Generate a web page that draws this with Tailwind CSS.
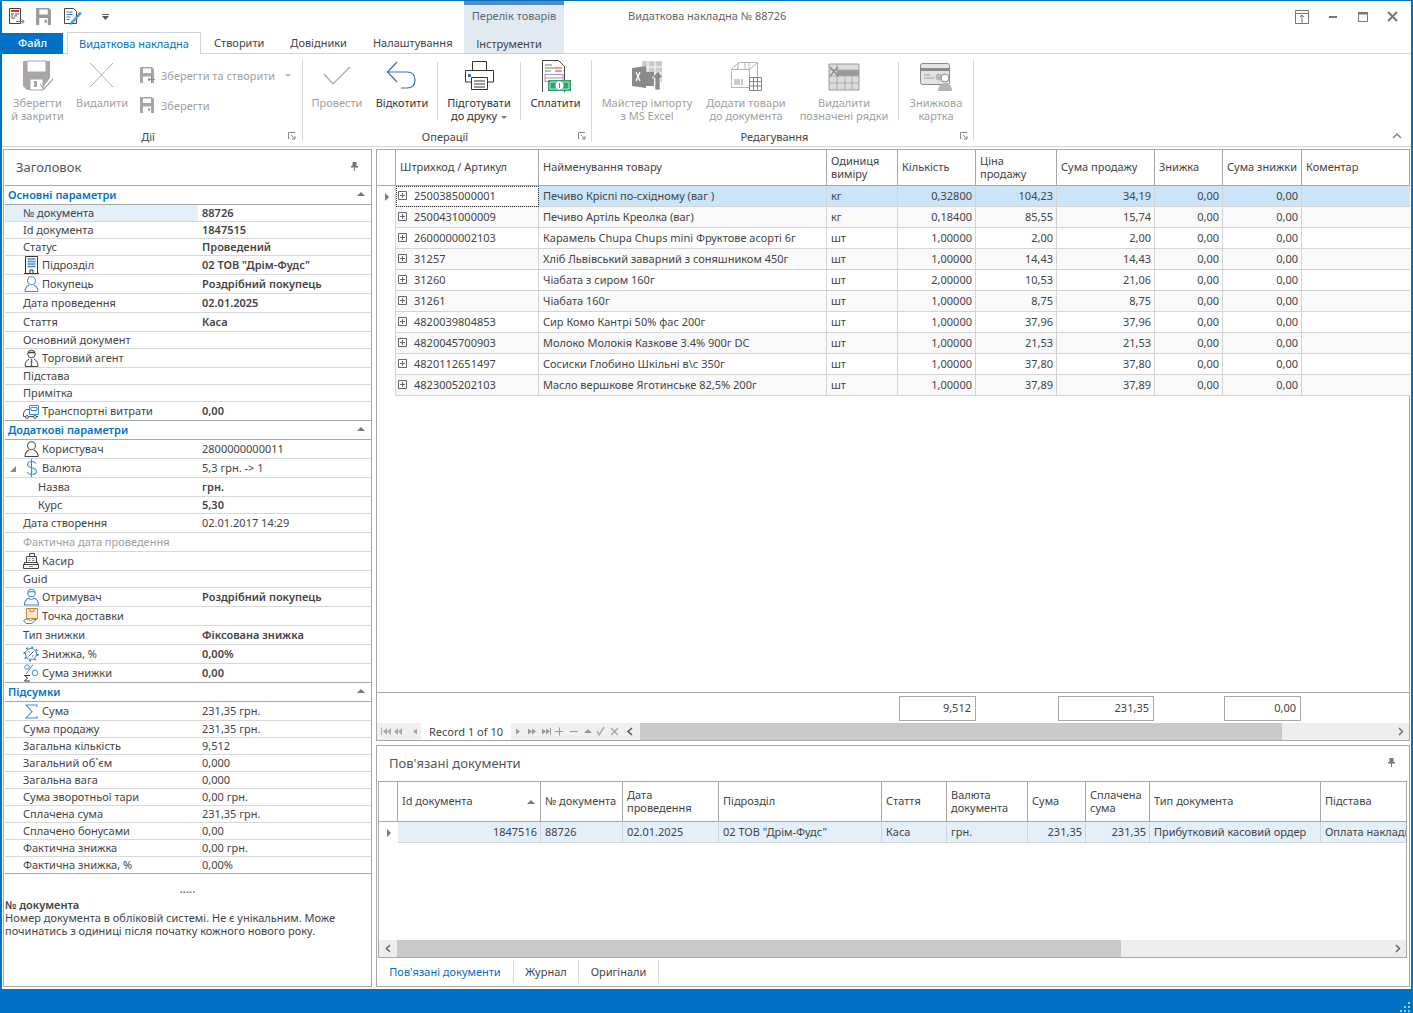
<!DOCTYPE html>
<html lang="uk">
<head>
  <meta charset="UTF-8">
  <title>Видаткова накладна № 88726</title>
  <script src="https://cdn.jsdelivr.net/npm/@tailwindcss/browser@4"></script>
</head>
<body class="h-screen overflow-hidden bg-white font-['Noto_Sans',sans-serif] text-[11px] leading-[13px] text-[#444]">
<svg class="hidden">
  <symbol id="save" viewBox="0 0 16 16"><path d="M1 0h12l2 2v14H1z" fill="currentColor"/><path d="M4 1.500h8V6H4zM4 9.500h8V16H4z" fill="#fff"/><path d="M9 11h2v3H9z" fill="currentColor"/></symbol>
  <symbol id="person" viewBox="0 0 16 18"><circle cx="8" cy="5.500" r="4.200" fill="none" stroke="currentColor" stroke-width="1.100"/><path d="M1 17c0-4 2.500-6 4.500-7M15 17c0-4-2.500-6-4.500-7M1 17h14" fill="none" stroke="currentColor" stroke-width="1.100"/></symbol>
</svg>

<div class="flex h-full flex-col border-x-2 border-t border-[#0072c6]">
  <!-- title bar -->
  <div class="relative z-10 flex h-[31px] shrink-0 items-start">
    <div class="flex h-[31px] w-[462px] items-center pl-[5px]">
      <svg width="19" height="19" viewBox="0 0 19 19" fill="none" class="mt-[-1px]"><path d="M2.500 1.500h11v15h-11z" stroke="#444"/><path d="M4 3h8v2H4z" fill="#e03030"/><path d="M4 7h3M8 7h4M4 9h2M7 9h3M4 11h4" stroke="#555"/><path d="M9 14.500h8M14.500 12l2.500 2.500-2.500 2.500" stroke="#3a9a6a"/></svg>
      <svg width="17" height="17" viewBox="0 0 16 16" class="ml-[9px] text-[#999]"><use href="#save"/></svg>
      <svg width="20" height="19" viewBox="0 0 20 19" fill="none" class="ml-[10px]"><path d="M2.500 1.500h9l3 3v12h-12z" stroke="#444"/><path d="M4.500 5h6M4.500 7.500h6M4.500 10h4M4.500 12.500h3" stroke="#2b7cc0"/><path d="M9 15l9-10 1.500 1.500-9 10-2.500 1z" fill="#5ba3d9" stroke="#2b7cc0" stroke-width=".5"/></svg>
      <svg width="7" height="6" viewBox="0 0 7 6" class="ml-[20px]"><path d="M0 0h7v1H0zM0 2h7L3.500 6z" fill="#555"/></svg>
    </div>
    <div class="flex h-[52px] w-[100px] flex-col items-center border-t-[4px] border-[#5b8ab5] bg-[#e1e9f2] text-[#5a6a7a]">
      <span class="mt-[4px]">Перелік товарів</span>
      <span class="mr-[10px] mt-[15px] text-[#444]">Інструменти</span>
    </div>
    <div class="ml-[64px] mt-[8px] text-[#666]">Видаткова накладна № 88726</div>
    <div class="ml-auto flex h-[31px] items-center pr-[13px] text-[#777]">
      <svg width="14" height="14" viewBox="0 0 14 14" fill="none" stroke="currentColor"><path d="M.5.500h13v13H.500zM.5 3.500h13M7 13V5M5 7l2-2 2 2"/></svg>
      <svg width="8" height="3" viewBox="0 0 8 3" class="ml-[20px] mt-[2px]"><path d="M0 0h8v2H0z" fill="currentColor"/></svg>
      <svg width="10" height="10" viewBox="0 0 10 10" fill="none" stroke="currentColor" class="ml-[21px]"><path d="M.5.500h9v9h-9z"/><path d="M0 0h10v2.500H0z" fill="currentColor" stroke="none"/></svg>
      <svg width="11" height="11" viewBox="0 0 11 11" fill="none" stroke="currentColor" stroke-width="2" class="ml-[19px]"><path d="M1 1l9 9M10 1l-9 9"/></svg>
    </div>
  </div>

  <!-- tabs -->
  <div class="flex h-[22px] shrink-0 items-end border-b border-[#d2d2d2]">
    <div class="mb-[-1px] flex h-[21px] w-[61px] items-center justify-center bg-[#0072c6] pb-[2px] font-medium text-white">Файл</div>
    <div class="relative top-px ml-[4px] flex h-[22px] w-[134px] items-center justify-center border-x border-t border-[#d2d2d2] bg-white text-[#0072c6]">Видаткова накладна</div>
    <div class="ml-[13px] flex h-[21px] items-center">Створити</div>
    <div class="ml-[26px] flex h-[21px] items-center">Довідники</div>
    <div class="ml-[26px] flex h-[21px] items-center">Налаштування</div>
  </div>

  <!-- ribbon -->
  <div class="relative flex h-[93px] shrink-0 border-b border-[#d2d2d2] pt-[6px] text-center">
    <div class="relative flex h-[81px] w-[301px] border-r border-[#d8d8d8] text-[#a0a0a0]">
      <div class="w-[71px]"><svg width="32" height="31" viewBox="0 0 32 31" class="mx-auto"><path d="M1 1h27v17l-9 12H5l-4-4z" fill="#a6a6a6"/><path d="M5 1h19v11H5zM8 19h13v11H8z" fill="#fff" stroke="#a6a6a6"/><path d="M12 21h3v6h-3z" fill="#a6a6a6"/><path d="M18 24l4 5 9-10" fill="none" stroke="#a6a6a6" stroke-width="1.200"/></svg><div class="mt-[5px]">Зберегти<br>й закрити</div></div>
      <div class="w-[58px]"><svg width="32" height="31" viewBox="0 0 32 31" class="mx-auto" fill="none" stroke="#b0b0b0"><path d="M4 3l23 24M27 3L4 27"/></svg><div class="mt-[5px]">Видалити</div></div>
      <div class="ml-[8px] flex flex-col text-left">
        <div class="mt-[7px] flex h-[16px] items-center"><svg width="16" height="16" viewBox="0 0 16 16" class="text-[#a6a6a6]"><use href="#save"/><path d="M9 12.500h7M12.500 9v7" stroke="#888" stroke-width="1" fill="none"/></svg><span class="ml-[6px]">Зберегти та створити</span><span class="ml-[10px] mt-[1px] h-0 w-0 border-x-[3px] border-t-[3px] border-x-transparent border-t-[#bbb]"></span></div>
        <div class="mt-[14px] flex h-[16px] items-center"><svg width="16" height="16" viewBox="0 0 16 16" class="text-[#a6a6a6]"><use href="#save"/></svg><span class="ml-[6px]">Зберегти</span></div>
      </div>
      <div class="absolute inset-x-0 bottom-[-2px] text-[#444] pr-[8px]">Дії</div>
      <svg width="8" height="8" viewBox="0 0 8 8" fill="none" stroke="#888" class="absolute bottom-[1px] right-[6px]"><path d="M.5 7V.5H7M3 3l4 4M4 7h3V4"/></svg>
    </div>
    <div class="relative flex h-[81px] w-[289px] border-r border-[#d8d8d8]">
      <div class="w-[68px] text-[#a0a0a0]"><svg width="32" height="31" viewBox="0 0 32 31" class="mx-auto" fill="none" stroke="#a6a6a6" stroke-width="1.200"><path d="M3 14l9 10L29 7"/></svg><div class="mt-[5px]">Провести</div></div>
      <div class="w-[62px] text-[#333]"><svg width="32" height="31" viewBox="0 0 32 31" class="mx-auto" fill="none" stroke="#3c6ea5" stroke-width="1.200"><path d="M2 12h19c5 0 8 3 8 8s-3 8-8 8h-6M11 2L1.500 12 11 22"/></svg><div class="mt-[5px]">Відкотити</div></div>
      <div class="ml-[4px] mt-[2px] h-[58px] w-px bg-[#d8d8d8]"></div>
      <div class="w-[82px] text-[#333]"><svg width="32" height="31" viewBox="0 0 32 31" class="mx-auto" fill="none" stroke="#333"><path d="M9.500 1.500h14v9h-14zM9 22H2.500V10.500h28V22H24M8.500 17.500h16v12h-16zM11 21h11M11 24h11M11 27h11"/><path d="M5 14h3v3H5z" fill="#2b7cc0" stroke="none"/></svg><div class="mt-[5px]">Підготувати<br>до друку <span class="ml-[1px] inline-block h-0 w-0 align-middle border-x-[3px] border-t-[3px] border-x-transparent border-t-[#777]"></span></div></div>
      <div class="mt-[2px] h-[58px] w-px bg-[#d8d8d8]"></div>
      <div class="w-[69px] text-[#333]"><svg width="32" height="33" viewBox="0 0 32 33" class="mx-auto mt-[-1px]" fill="none"><path d="M2.500 1.500h16l6 6v26h-22z" stroke="#444"/><path d="M5 6h7M5 9h10M5 12h6" stroke="#777"/><path d="M15 9h7" stroke="#d33"/><path d="M15 12h7" stroke="#d33"/><path d="M5 15.500h18v7H5z" stroke="#a78bc0"/><path d="M5 19h18" stroke="#a78bc0"/><path d="M8 21h23v11H8z" fill="#2fa36b"/><circle cx="19.500" cy="26.500" r="4" fill="#fff"/><path d="M10 23h19v7H10z" stroke="#fff" stroke-width=".7"/><path d="M19.500 24v5" stroke="#2fa36b"/></svg><div class="mt-[4px]">Сплатити</div></div>
      <div class="absolute inset-x-0 bottom-[-2px] text-[#444] pr-[4px]">Операції</div>
      <svg width="8" height="8" viewBox="0 0 8 8" fill="none" stroke="#888" class="absolute bottom-[1px] right-[5px]"><path d="M.5 7V.5H7M3 3l4 4M4 7h3V4"/></svg>
    </div>
    <div class="relative flex h-[81px] w-[382px] border-r border-[#d8d8d8] text-[#a0a0a0]">
      <div class="w-[110px]"><svg width="32" height="31" viewBox="0 0 32 31" class="mx-auto" fill="none"><path d="M11 1h20v21H11z" fill="#ccc"/><path d="M11 7h20M11 13h20M17 1v21M24 1v21" stroke="#fff"/><path d="M1 8l14-2v22L1 26z" fill="#8a8a8a"/><path d="M15 12h8v14h-8z" fill="#8a8a8a"/><path d="M24 30V18h-3l6-7 5 7h-3v12z" fill="#8a8a8a" stroke="#fff" stroke-width=".7"/><path d="M5 12l4 9M9 12l-4 9" stroke="#fff" stroke-width="1.300"/></svg><div class="mt-[5px]">Майстер імпорту<br>з MS Excel</div></div>
      <div class="w-[88px]"><svg width="32" height="31" viewBox="0 0 32 31" class="mx-auto" fill="none" stroke="#b5b5b5"><path d="M1.500 9.500l7-7h19v18M1.500 9.500h18v18h-18zM19.500 9.500l8-7M8.500 2.500l-1 7M15 2.500v7M19 2.500v7"/><path d="M5 19v6M7 19v6M9 19v6M12 19v6" stroke="#999"/><path d="M19.500 17.500h12v13h-12zM19.500 21.500h12M19.500 26h12M23.500 17.500v13M27.500 17.500v13" fill="#fff" stroke="#888"/></svg><div class="mt-[5px]">Додати товари<br>до документа</div></div>
      <div class="w-[108px]"><svg width="32" height="31" viewBox="0 0 32 31" class="mx-auto" fill="none"><path d="M1 4h30v26H1z" fill="#dcdcdc" stroke="#999"/><path d="M9 10h22v6H9z" fill="#999"/><path d="M1 10h30M1 16h30M1 23h30M9 4v26M17 16v14M24 16v14" stroke="#aaa"/><path d="M2 7l8 9M10 7l-8 9" stroke="#888" stroke-width="1.300"/></svg><div class="mt-[5px]">Видалити<br>позначені рядки</div></div>
      <div class="mt-[2px] h-[58px] w-px bg-[#d8d8d8]"></div>
      <div class="w-[74px]"><svg width="32" height="31" viewBox="0 0 32 31" class="mx-auto" fill="none"><rect x=".5" y="3.500" width="29" height="21" rx="2" fill="#e4e4e4" stroke="#8a8a8a"/><path d="M1 8h28v3H1z" fill="#8a8a8a"/><path d="M4 15h6M4 18h10" stroke="#999"/><circle cx="19" cy="17" r="3.500" fill="#bbb"/><circle cx="25" cy="18" r="4" fill="#fff" stroke="#8a8a8a"/><path d="M18 31c0-5 3-8 7-8s7 3 7 8z" fill="#b5b5b5"/></svg><div class="mt-[5px]">Знижкова<br>картка</div></div>
      <div class="absolute inset-x-0 bottom-[-2px] text-[#444] pr-[16px]">Редагування</div>
      <svg width="8" height="8" viewBox="0 0 8 8" fill="none" stroke="#888" class="absolute bottom-[1px] right-[5px]"><path d="M.5 7V.5H7M3 3l4 4M4 7h3V4"/></svg>
    </div>
    <svg width="10" height="6" viewBox="0 0 10 6" fill="none" stroke="#888" stroke-width="1.600" class="absolute bottom-[7px] right-[9px]"><path d="M1 5l4-4 4 4"/></svg>
  </div>

  <!-- body -->
  <div class="flex min-h-0 flex-1 pl-px pr-px pt-[2px] pb-[2px]">
    <!-- left panel -->
    <div class="flex w-[369px] shrink-0 flex-col border border-[#a8a8a8]">
      <div class="relative flex h-[35px] shrink-0 items-center pl-[12px] text-[13px] text-[#555]">Заголовок
        <svg width="7" height="9" viewBox="0 0 7 9" class="absolute right-[13px] top-[12px]"><path d="M1.500 0h4v4h1.500v1.500H4V9H3V5.500H0V4h1.500z" fill="#777"/></svg>
      </div>
      <div id="props" class="ml-px border-t border-[#a8a8a8]"></div>
      <div class="mt-[11px] text-center text-[#777] font-bold leading-[8px]">.....</div>
      <div class="mt-[5px] pl-px">
        <b class="font-semibold">№ документа</b><br>
        Номер документа в обліковій системі. Не є унікальним. Може<br>починатись з одиниці після початку кожного нового року.
      </div>
    </div>

    <!-- right column -->
    <div class="ml-[4px] flex min-w-0 flex-1 flex-col">
      <div class="flex h-[592px] shrink-0 flex-col border border-[#a8a8a8]">
        <div class="grid h-[36px] shrink-0 grid-cols-[19px_143px_288px_71px_78px_81px_98px_68px_79px_108px] items-stretch border-b border-[#a8a8a8]">
          <div class="border-r border-[#a8a8a8]"></div>
          <div class="flex items-center border-r border-[#a8a8a8] pb-[2px] pl-[4px]">Штрихкод / Артикул</div>
          <div class="flex items-center border-r border-[#a8a8a8] pb-[2px] pl-[4px]">Найменування товару</div>
          <div class="flex items-center border-r border-[#a8a8a8] pb-[2px] pl-[4px]">Одиниця<br>виміру</div>
          <div class="flex items-center border-r border-[#a8a8a8] pb-[2px] pl-[4px]">Кількість</div>
          <div class="flex items-center border-r border-[#a8a8a8] pb-[2px] pl-[4px]">Ціна<br>продажу</div>
          <div class="flex items-center border-r border-[#a8a8a8] pb-[2px] pl-[4px]">Сума продажу</div>
          <div class="flex items-center border-r border-[#a8a8a8] pb-[2px] pl-[4px]">Знижка</div>
          <div class="flex items-center border-r border-[#a8a8a8] pb-[2px] pl-[4px]">Сума знижки</div>
          <div class="flex items-center pb-[2px] pl-[4px]">Коментар</div>
        </div>
        <div id="goods" class="flex-1"></div>
        <div class="flex h-[31px] shrink-0 items-start border-t border-[#a8a8a8] pt-[3px] text-right">
          <div class="ml-[522px] h-[25px] w-[77px] border border-[#a8a8a8] pr-[4px] leading-[22px]">9,512</div>
          <div class="ml-[82px] h-[25px] w-[96px] border border-[#a8a8a8] pr-[4px] leading-[22px]">231,35</div>
          <div class="ml-[70px] h-[25px] w-[77px] border border-[#a8a8a8] pr-[4px] leading-[22px]">0,00</div>
        </div>
        <div class="flex h-[17px] shrink-0">
          <div class="flex h-full w-[44px] bg-[#f0f0f0]"><svg width="44" height="17" viewBox="0 0 44 17" fill="#aaa"><path d="M4 5h1v7H4zM10 5v7L6 8.500zM14 5v7l-4-3.500zM21 5v7l-4-3.500zM25 5v7l-4-3.500zM40 5.500v6l-4-3z"/></svg></div>
          <div class="flex w-[90px] items-center justify-center bg-white">Record 1 of 10</div>
          <div class="h-full w-[129px] bg-[#f0f0f0]"><svg width="129" height="17" viewBox="0 0 129 17" fill="#999"><path d="M5 5.500v6l4-3zM17 5.500v6l4-3zM21 5.500v6l4-3zM31 5.500v6l4-3zM35 5.500v6l4-3zM39 5h1v7h-1zM44 8h8v1h-8zM48 4.500h1v8h-1zM59 8h8v1h-8zM73 10l4-4 4 4z"/><path d="M86 8l2 4 5-8M100 5l7 7M107 5l-7 7" fill="none" stroke="#aaa" stroke-width="1.500"/><path d="M121 5l-4 3.500 4 3.500" fill="none" stroke="#555" stroke-width="1.500"/></svg></div>
          <div class="h-full w-[642px] bg-[#c9c9c9]"></div>
          <div class="flex h-full flex-1 items-center justify-end bg-[#eee] pr-[5px]"><svg width="6" height="9" viewBox="0 0 6 9" fill="none" stroke="#777" stroke-width="1.500"><path d="M1 1l3.500 3.500L1 8"/></svg></div>
        </div>
      </div>

      <div class="mt-[4px] flex min-h-0 flex-1 flex-col border border-[#a8a8a8]">
        <div class="relative flex h-[35px] shrink-0 items-center pl-[12px] text-[13px] text-[#555]">Пов'язані документи
          <svg width="7" height="9" viewBox="0 0 7 9" class="absolute right-[14px] top-[12px]"><path d="M1.500 0h4v4h1.500v1.500H4V9H3V5.500H0V4h1.500z" fill="#777"/></svg>
        </div>
        <div class="ml-px mr-[2px] flex h-[177px] shrink-0 flex-col overflow-hidden border border-[#a8a8a8]">
          <div class="grid h-[40px] shrink-0 grid-cols-[19px_143px_82px_96px_163px_65px_81px_58px_64px_171px_87px] border-b border-[#a8a8a8]">
            <div class="border-r border-[#a8a8a8]"></div>
            <div class="relative flex items-center border-r border-[#a8a8a8] pb-[2px] pl-[4px]">Id документа<span class="absolute right-[5px] top-[18px] h-0 w-0 border-x-[4px] border-b-[4px] border-x-transparent border-b-[#777]"></span></div>
            <div class="flex items-center border-r border-[#a8a8a8] pb-[2px] pl-[4px]">№ документа</div>
            <div class="flex items-center border-r border-[#a8a8a8] pb-[2px] pl-[4px]">Дата<br>проведення</div>
            <div class="flex items-center border-r border-[#a8a8a8] pb-[2px] pl-[4px]">Підрозділ</div>
            <div class="flex items-center border-r border-[#a8a8a8] pb-[2px] pl-[4px]">Стаття</div>
            <div class="flex items-center border-r border-[#a8a8a8] pb-[2px] pl-[4px]">Валюта<br>документа</div>
            <div class="flex items-center border-r border-[#a8a8a8] pb-[2px] pl-[4px]">Сума</div>
            <div class="flex items-center border-r border-[#a8a8a8] pb-[2px] pl-[4px]">Сплачена<br>сума</div>
            <div class="flex items-center border-r border-[#a8a8a8] pb-[2px] pl-[4px]">Тип документа</div>
            <div class="flex items-center pb-[2px] pl-[4px]">Підстава</div>
          </div>
          <div class="grid h-[21px] shrink-0 grid-cols-[19px_143px_82px_96px_163px_65px_81px_58px_64px_171px_87px]">
            <div class="flex items-center pl-[8px]"><span class="h-0 w-0 border-y-[4px] border-l-[4px] border-y-transparent border-l-[#777]"></span></div>
            <div class="flex items-center justify-end border-b border-r border-[#cfd6dc] bg-[#e3eff9] pb-[2px] pr-[3px]">1847516</div>
            <div class="flex items-center border-b border-r border-[#cfd6dc] bg-[#e3eff9] pb-[2px] pl-[4px]">88726</div>
            <div class="flex items-center border-b border-r border-[#cfd6dc] bg-[#e3eff9] pb-[2px] pl-[4px]">02.01.2025</div>
            <div class="flex items-center border-b border-r border-[#cfd6dc] bg-[#e3eff9] pb-[2px] pl-[4px]">02 ТОВ "Дрім-Фудс"</div>
            <div class="flex items-center border-b border-r border-[#cfd6dc] bg-[#e3eff9] pb-[2px] pl-[4px]">Каса</div>
            <div class="flex items-center border-b border-r border-[#cfd6dc] bg-[#e3eff9] pb-[2px] pl-[4px]">грн.</div>
            <div class="flex items-center justify-end border-b border-r border-[#cfd6dc] bg-[#e3eff9] pb-[2px] pr-[3px]">231,35</div>
            <div class="flex items-center justify-end border-b border-r border-[#cfd6dc] bg-[#e3eff9] pb-[2px] pr-[3px]">231,35</div>
            <div class="flex items-center border-b border-r border-[#cfd6dc] bg-[#e3eff9] pb-[2px] pl-[4px]">Прибутковий касовий ордер</div>
            <div class="flex items-center overflow-hidden whitespace-nowrap border-b border-[#cfd6dc] bg-[#e3eff9] pb-[2px] pl-[4px]">Оплата накладної</div>
          </div>
          <div class="flex-1"></div>
          <div class="flex h-[17px] shrink-0">
            <div class="flex h-full w-[18px] items-center justify-center bg-[#eee]"><svg width="6" height="9" viewBox="0 0 6 9" fill="none" stroke="#666" stroke-width="1.500"><path d="M5 1L1.500 4.500 5 8"/></svg></div>
            <div class="h-full w-[724px] bg-[#c9c9c9]"></div>
            <div class="flex h-full flex-1 items-center justify-end bg-[#eee] pr-[5px]"><svg width="6" height="9" viewBox="0 0 6 9" fill="none" stroke="#666" stroke-width="1.500"><path d="M1 1l3.500 3.500L1 8"/></svg></div>
          </div>
        </div>
        <div class="flex flex-1 items-center pb-[1px]">
          <div class="flex h-[23px] w-[137px] items-center justify-center border-r border-[#d8d8d8] text-[#0072c6]">Пов'язані документи</div>
          <div class="flex h-[23px] w-[65px] items-center justify-center border-r border-[#d8d8d8]">Журнал</div>
          <div class="flex h-[23px] w-[80px] items-center justify-center border-r border-[#d8d8d8]">Оригінали</div>
        </div>
      </div>
    </div>
  </div>

  <!-- status bar -->
  <div class="relative h-[24px] shrink-0 bg-[#0072c6]">
    <svg width="10" height="10" viewBox="0 0 10 10" class="absolute bottom-[1px] right-[1px]" fill="#a9cde8"><path d="M8 0h2v2H8zM4 4h2v2H4zM8 4h2v2H8zM0 8h2v2H0zM4 8h2v2H4zM8 8h2v2H8z"/></svg>
  </div>
</div>

<script>
  const I = {
    building: '<svg width="15" height="18" viewBox="0 0 15 18" fill="none" stroke="#333"><path d="M1.500 17V.5h12V17M0 17.500h15M6 17v-3h3v3"/><path d="M3.500 3h8M3.500 5.500h8M3.500 8h8M3.500 10.500h8" stroke="#3a8dd0" stroke-width="1.300"/></svg>',
    buyer: '<svg width="15" height="18" viewBox="0 0 16 18" class="text-[#3a8dd0]"><use href="#person"/></svg>',
    agent: '<svg width="15" height="18" viewBox="0 0 15 18" fill="none" stroke="#444"><circle cx="7.500" cy="5" r="3.800"/><path d="M4 3.500h7" stroke-width="1.500"/><path d="M1 17c0-4 2-6 4-7M14 17c0-4-2-6-4-7M1 17.500h13"/><path d="M7.500 10v7" stroke="#8a4a9a" stroke-width="1.500"/></svg>',
    truck: '<svg width="16" height="15" viewBox="0 0 16 15" fill="none" stroke="#555"><path d="M6.500 1.500h9v9h-9z" stroke="#3a8dd0"/><path d="M8 3.500h6v3H8z" stroke="#3a8dd0"/><path d="M6 5.500H3L.5 9v3.500H15"/><circle cx="4" cy="13" r="1.500" fill="#fff"/><circle cx="12" cy="13" r="1.500" fill="#fff"/></svg>',
    user: '<svg width="15" height="18" viewBox="0 0 16 18" class="text-[#444]"><use href="#person"/></svg>',
    dollar: '<svg width="15" height="18" viewBox="0 0 15 18" fill="none" stroke="#3a8dd0" stroke-width="1.100"><path d="M7.500 0v18M12 4.500C11 3 9.500 2.500 7.500 2.500 5 2.500 3.500 3.800 3.500 5.500c0 4 9 2.500 9 7 0 2-2 3-5 3-2 0-3.500-.7-4.500-2.200"/></svg>',
    cash: '<svg width="16" height="16" viewBox="0 0 16 16" fill="none" stroke="#444"><path d="M6.500 .5h5v3h-5zM3.500 3.500h10v6h-10zM1.500 9.500h13v2h-13zM.5 11.500h15v4H.5z"/><path d="M5.500 5.500h2M9 5.500h2.500M5.500 7.500h2M9 7.500h2.500M6 13.500h4" stroke="#888"/></svg>',
    recv: '<svg width="15" height="18" viewBox="0 0 15 18" fill="none" stroke="#3a8dd0" stroke-width="1.100"><circle cx="7.500" cy="5" r="3.800"/><path d="M4 4c2 0 5-1 7 0"/><path d="M.5 17c0-4 2-6 4.500-7 1 2 4 2 5 0 2.500 1 4.500 3 4.500 7z"/></svg>',
    box: '<svg width="16" height="16" viewBox="0 0 16 16" fill="none"><path d="M3.500.5h11v10h-11z" fill="#fbe9d6" stroke="#d9822b"/><path d="M7 .5v3h4v-3" stroke="#d9822b"/><path d="M.5 12.500l3-1.500 4 1.500 3-1 3 0-5 4H3z" fill="#fff" stroke="#3a8dd0"/></svg>',
    gear: '<svg width="16" height="16" viewBox="0 0 16 16" fill="none" stroke="#3a8dd0"><circle cx="8" cy="8" r="5.500"/><circle cx="8" cy="8" r="6.800" stroke-width="1.800" stroke-dasharray="2 3.340"/><path d="M5.500 10.500l5-5M5.500 6h1.500M9 10h1.500" stroke="#555"/></svg>',
    sumpct: '<svg width="16" height="18" viewBox="0 0 16 18" fill="none"><path d="M10 .5L3 10" stroke="#3a8dd0"/><circle cx="4" cy="3" r="2.200" stroke="#3a8dd0"/><circle cx="12" cy="9" r="2.800" stroke="#3a8dd0"/><path d="M7 11.500H1.500l3 2.500-3 3H7" stroke="#333"/></svg>',
    sigma: '<svg width="15" height="15" viewBox="0 0 15 15" fill="none" stroke="#3a8dd0" stroke-width="1.100"><path d="M13 3V1H2l6 6.500L2 14h11v-2"/></svg>'
  };
  // [label, value, height, style of value, icon, indent, selected]
  const sections = [
    ['Основні параметри', [
      ['№ документа', '88726', 17, 'b', null, 0, true],
      ['Id документа', '1847515', 17, 'b'],
      ['Статус', 'Проведений', 17, 'b'],
      ['Підрозділ', '02 ТОВ "Дрім-Фудс"', 19, 'b', 'building'],
      ['Покупець', 'Роздрібний покупець', 19, 'b', 'buyer'],
      ['Дата проведення', '02.01.2025', 19, 'b'],
      ['Стаття', 'Каса', 19, 'b'],
      ['Основний документ', '', 17],
      ['Торговий агент', '', 19, '', 'agent'],
      ['Підстава', '', 17],
      ['Примітка', '', 17],
      ['Транспортні витрати', '0,00', 19, 'b', 'truck']
    ]],
    ['Додаткові параметри', [
      ['Користувач', '2800000000011', 19, '', 'user'],
      ['Валюта', '5,3 грн. -> 1', 19, '', 'dollar', 2],
      ['Назва', 'грн.', 19, 'b', null, 1],
      ['Курс', '5,30', 17, 'b', null, 1],
      ['Дата створення', '02.01.2017 14:29', 19],
      ['Фактична дата проведення', '', 19, 'd'],
      ['Касир', '', 19, '', 'cash'],
      ['Guid', '', 17],
      ['Отримувач', 'Роздрібний покупець', 19, 'b', 'recv'],
      ['Точка доставки', '', 19, '', 'box'],
      ['Тип знижки', 'Фіксована знижка', 19, 'b'],
      ['Знижка, %', '0,00%', 19, 'b', 'gear'],
      ['Сума знижки', '0,00', 19, 'b', 'sumpct']
    ]],
    ['Підсумки', [
      ['Сума', '231,35 грн.', 19, '', 'sigma'],
      ['Сума продажу', '231,35 грн.', 17],
      ['Загальна кількість', '9,512', 17],
      ['Загальний об`єм', '0,000', 17],
      ['Загальна вага', '0,000', 17],
      ['Сума зворотньої тари', '0,00 грн.', 17],
      ['Сплачена сума', '231,35 грн.', 17],
      ['Сплачено бонусами', '0,00', 17],
      ['Фактична знижка', '0,00 грн.', 17],
      ['Фактична знижка, %', '0,00%', 17]
    ]]
  ];
  document.getElementById('props').innerHTML = sections.map(([title, rows]) =>
    `<div class="flex h-[19px] items-center justify-between border-b border-[#a8a8a8] pb-[2px] pl-[3px] pr-[6px] font-semibold text-[#0072c6]">${title}<span class="h-0 w-0 border-x-[4px] border-b-[4px] border-x-transparent border-b-[#777]"></span></div>` +
    rows.map(([label, value, h, style, icon, indent, sel], i) => {
      const last = i === rows.length - 1;
      const height = h === 19 ? 'h-[19px]' : 'h-[17px]';
      const line = last ? 'border-[#a8a8a8]' : 'border-[#d8d8d8]';
      const pad = indent === 1 ? 'pl-[33px]' : 'pl-[18px]';
      const val = style === 'b' ? 'font-semibold' : '';
      const lab = style === 'd' ? 'text-[#a0a0a0]' : '';
      const arrow = indent === 2 ? '<span class="absolute left-[5px] top-[7px] h-0 w-0 border-b-[6px] border-l-[6px] border-b-[#888] border-l-transparent"></span>' : '';
      return `<div class="relative flex ${height} items-stretch border-b ${line}">${arrow}` +
        `<div class="flex w-[193px] shrink-0 items-center gap-[3px] ${pad} ${lab} ${sel ? 'bg-[#e3eff9]' : ''}">${icon ? `<span class="flex w-[16px] shrink-0 justify-center">${I[icon]}</span>` : ''}<span class="mb-[2px]">${label}</span></div>` +
        `<div class="flex items-center pb-[2px] pl-[4px] ${val}">${value}</div></div>`;
    }).join('')
  ).join('');

  const goods = [
    ['2500385000001', 'Печиво Кріспі по-східному (ваг )', 'кг', '0,32800', '104,23', '34,19'],
    ['2500431000009', 'Печиво Артіль Креолка (ваг)', 'кг', '0,18400', '85,55', '15,74'],
    ['2600000002103', 'Карамель Chupa Chups mini Фруктове асорті 6г', 'шт', '1,00000', '2,00', '2,00'],
    ['31257', 'Хліб Львівський заварний з соняшником 450г', 'шт', '1,00000', '14,43', '14,43'],
    ['31260', 'Чіабата з сиром 160г', 'шт', '2,00000', '10,53', '21,06'],
    ['31261', 'Чіабата 160г', 'шт', '1,00000', '8,75', '8,75'],
    ['4820039804853', 'Сир Комо Кантрі 50% фас 200г', 'шт', '1,00000', '37,96', '37,96'],
    ['4820045700903', 'Молоко Молокія Казкове 3.4% 900г DC', 'шт', '1,00000', '21,53', '21,53'],
    ['4820112651497', 'Сосиски Глобино Шкільні в\\с 350г', 'шт', '1,00000', '37,80', '37,80'],
    ['4823005202103', 'Масло вершкове Яготинське 82,5% 200г', 'шт', '1,00000', '37,89', '37,89']
  ];
  document.getElementById('goods').innerHTML = goods.map((r, i) => {
    const bg = i === 0 ? 'bg-[#cce4f7]' : i % 2 ? 'bg-[#f9f9f9]' : 'bg-white';
    const c = 'flex items-center border-r border-b border-[#d4d4d4]';
    const first = i === 0 ? 'bg-white outline-1 -outline-offset-1 outline-dotted outline-[#333]' : bg;
    return `<div class="grid h-[21px] grid-cols-[19px_143px_288px_71px_78px_81px_98px_68px_79px_108px]">` +
      `<div class="flex items-center border-r border-[#d4d4d4] pl-[8px]">${i === 0 ? '<span class="h-0 w-0 border-y-[4px] border-l-[4px] border-y-transparent border-l-[#777]"></span>' : ''}</div>` +
      `<div class="${c} ${first} pl-[2px]"><svg width="9" height="9" viewBox="0 0 9 9" fill="none" stroke="#666" class="mb-[2px] mr-[7px]"><path d="M.5.500h8v8h-8zM2 4.500h5M4.500 2v5"/></svg><span class="mb-[2px]">${r[0]}</span></div>` +
      `<div class="${c} ${bg} whitespace-nowrap pb-[2px] pl-[4px]">${r[1]}</div>` +
      `<div class="${c} ${bg} pb-[2px] pl-[4px]">${r[2]}</div>` +
      `<div class="${c} ${bg} justify-end pb-[2px] pr-[3px]">${r[3]}</div>` +
      `<div class="${c} ${bg} justify-end pb-[2px] pr-[3px]">${r[4]}</div>` +
      `<div class="${c} ${bg} justify-end pb-[2px] pr-[3px]">${r[5]}</div>` +
      `<div class="${c} ${bg} justify-end pb-[2px] pr-[3px]">0,00</div>` +
      `<div class="${c} ${bg} justify-end pb-[2px] pr-[3px]">0,00</div>` +
      `<div class="flex border-b border-[#d4d4d4] ${bg}"></div></div>`;
  }).join('');
</script>
</body>
</html>
